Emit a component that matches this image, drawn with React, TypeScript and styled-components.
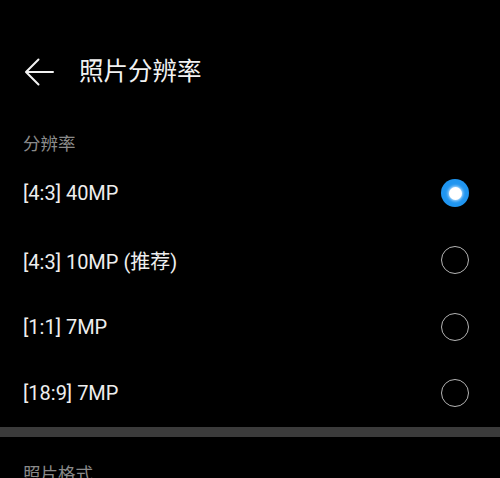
import React, { useState } from 'react';
import styled, { createGlobalStyle } from 'styled-components';

const GlobalStyle = createGlobalStyle`
	html, body {
		margin: 0;
		padding: 0;
		background: #000000;
	}
	body {
		font-family: Roboto, "Noto Sans CJK SC", sans-serif;
		-webkit-font-smoothing: antialiased;
	}
`;

const Page = styled.div`
	width: 500px;
	height: 478px;
	overflow: hidden;
	background: #000000;
`;

const TopBar = styled.div`
	display: flex;
	align-items: center;
	height: 56px;
	margin-top: 44px;
	padding-left: 24px;
`;

const BackButton = styled.button`
	display: flex;
	align-items: center;
	justify-content: center;
	width: 30px;
	height: 30px;
	padding: 0;
	margin-right: 25px;
	border: none;
	background: transparent;
	cursor: pointer;
`;

const Title = styled.h1`
	margin: 0;
	font-size: 24.5px;
	font-weight: 400;
	color: #f2f2f2;
	line-height: 32px;
`;

const SectionTitle = styled.div<{ top: number }>`
	margin-top: ${({ top }) => `${top}px`};
	padding-left: 23px;
	padding-bottom: 4px;
	font-size: 17.5px;
	line-height: 24px;
	color: #8a8a8a;
`;

const List = styled.div`
	display: flex;
	flex-direction: column;
`;

const Row = styled.div`
	display: flex;
	flex-shrink: 0;
	align-items: center;
	justify-content: space-between;
	height: 66.7px;
	padding: 0 31px 0 23px;
	cursor: pointer;
`;

const Label = styled.span`
	font-size: 20px;
	color: #eeeeee;
`;

const Radio = styled.span<{ checked: boolean }>`
	box-sizing: border-box;
	width: 28px;
	height: 28px;
	border-radius: 50%;
	display: flex;
	align-items: center;
	justify-content: center;
	border: ${({ checked }) => (checked ? 'none' : '1.6px solid #b4b4b4')};
	background: ${({ checked }) => (checked ? '#1f95f0' : 'transparent')};
	&::after {
		content: '';
		display: ${({ checked }) => (checked ? 'block' : 'none')};
		width: 13px;
		height: 13px;
		border-radius: 50%;
		background: #ffffff;
		box-shadow: 0 0 3px 1px rgba(200, 230, 255, 0.9);
	}
`;

const Divider = styled.div`
	height: 10px;
	background: #3b3b3b;
`;

const options = ['[4:3] 40MP', '[4:3] 10MP (推荐)', '[1:1] 7MP', '[18:9] 7MP'];

function App() {
	const [selected, setSelected] = useState(0);

	return (
		<Page>
			<GlobalStyle />
			<TopBar>
				<BackButton aria-label="返回">
					<svg width="30" height="30" viewBox="0 0 30 30" fill="none">
						<path
							d="M29 15H3M14.5 2.5L2 15l12.5 12.5"
							stroke="#f2f2f2"
							strokeWidth="2"
							strokeLinecap="round"
							strokeLinejoin="round"
						/>
					</svg>
				</BackButton>
				<Title>照片分辨率</Title>
			</TopBar>
			<SectionTitle top={32}>分辨率</SectionTitle>
			<List>
				{options.map((opt, idx) => (
					<Row key={opt} onClick={() => setSelected(idx)}>
						<Label>{opt}</Label>
						<Radio checked={selected === idx} />
					</Row>
				))}
			</List>
			<Divider />
			<SectionTitle top={25}>照片格式</SectionTitle>
		</Page>
	);
}

export default App;
